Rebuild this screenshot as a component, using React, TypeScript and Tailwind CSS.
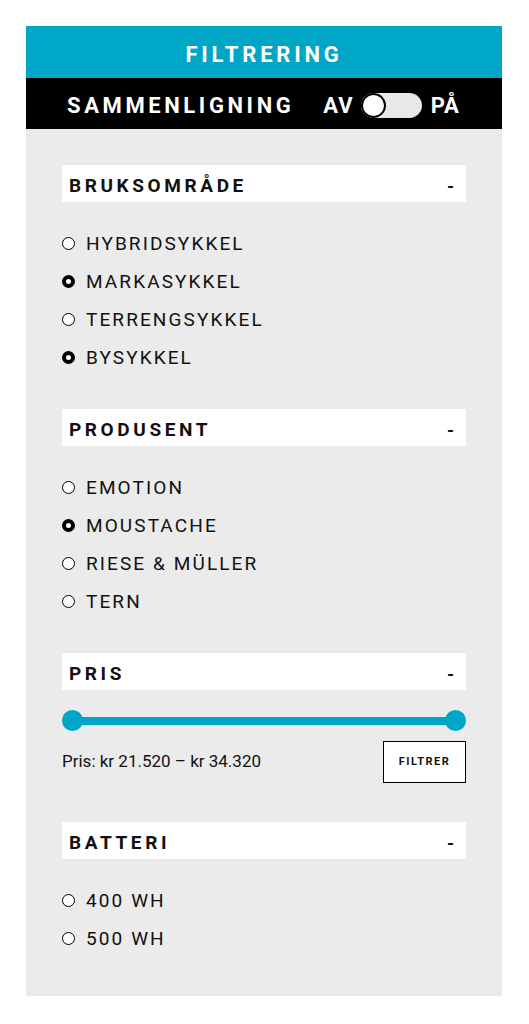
import React from 'react';

type Option = { label: string; checked?: boolean };

const sections: { title: string; options: Option[] }[] = [
  {
    title: 'BRUKSOMRÅDE',
    options: [
      { label: 'HYBRIDSYKKEL' },
      { label: 'MARKASYKKEL', checked: true },
      { label: 'TERRENGSYKKEL' },
      { label: 'BYSYKKEL', checked: true },
    ],
  },
  {
    title: 'PRODUSENT',
    options: [
      { label: 'EMOTION' },
      { label: 'MOUSTACHE', checked: true },
      { label: 'RIESE & MÜLLER' },
      { label: 'TERN' },
    ],
  },
];

const SectionHeader: React.FC<{ title: string }> = ({ title }) => (
  <div className="flex h-[37px] items-center justify-between bg-white pl-[7px] pr-[12px] pt-[5px]">
    <span className="text-[19px] font-bold tracking-[3.6px] text-[#111]">{title}</span>
    <span className="text-[18px] font-bold text-[#111]">-</span>
  </div>
);

const Radio: React.FC<Option> = ({ label, checked }) => (
  <div className="flex h-[38px] items-center">
    <span
      className={`box-border h-[13px] w-[13px] rounded-full border-black bg-white ${
        checked ? 'border-[4px]' : 'border-[1.5px]'
      }`}
    />
    <span className="ml-[11px] pt-[2px] text-[19px] tracking-[2.1px] text-[#111]">{label}</span>
  </div>
);

const OptionList: React.FC<{ options: Option[] }> = ({ options }) => (
  <div className="mt-[22px] flex flex-col">
    {options.map((o) => (
      <Radio key={o.label} {...o} />
    ))}
  </div>
);

export default function App() {
  return (
    <div className="min-h-screen bg-white pt-[26px]" style={{ fontFamily: 'Roboto, "Liberation Sans", sans-serif' }}>
      <div className="mx-[26px] w-[476px]">
        <div className="flex h-[52px] items-center justify-center bg-[#00a6c6] pt-[4px]">
          <span className="text-[22px] font-bold tracking-[3.8px] text-white">FILTRERING</span>
        </div>
        <div className="flex h-[51px] items-center bg-black pl-[41px] pt-[3px]">
          <span className="text-[22px] font-bold tracking-[3.6px] text-white">SAMMENLIGNING</span>
          <span className="ml-[29px] text-[22px] font-bold tracking-[1px] text-white">AV</span>
          <div className="ml-[7px] flex h-[25px] w-[61px] items-center rounded-full bg-[#e8e8e8]">
            <span className="box-border h-[25px] w-[25px] rounded-full border-[2.5px] border-black bg-white" />
          </div>
          <span className="ml-[9px] text-[22px] font-bold tracking-[1px] text-white">PÅ</span>
        </div>
        <div className="bg-[#ebebeb] px-9 pb-[39px] pt-9">
          {sections.map((s, i) => (
            <div key={s.title} className={i > 0 ? 'mt-[33px]' : ''}>
              <SectionHeader title={s.title} />
              <OptionList options={s.options} />
            </div>
          ))}

          <div className="mt-[33px]">
            <SectionHeader title="PRIS" />
            <div className="relative mt-5 h-[21px]">
              <div className="absolute left-[10px] right-[10px] top-[7px] h-[8px] bg-[#00a6c6]" />
              <span className="absolute left-0 top-0 h-[21px] w-[21px] rounded-full bg-[#00a6c6]" />
              <span className="absolute right-0 top-0 h-[21px] w-[21px] rounded-full bg-[#00a6c6]" />
            </div>
            <div className="mt-[10px] flex items-center justify-between">
              <span className="text-[17px] text-[#111]">Pris: kr 21.520 – kr 34.320</span>
              <button className="flex h-[42px] w-[83px] items-center justify-center border border-black bg-white text-[11px] font-bold tracking-[1.5px] text-[#111]">
                FILTRER
              </button>
            </div>
          </div>

          <div className="mt-[39px]">
            <SectionHeader title="BATTERI" />
            <OptionList options={[{ label: '400 WH' }, { label: '500 WH' }]} />
          </div>
        </div>
      </div>
    </div>
  );
}
